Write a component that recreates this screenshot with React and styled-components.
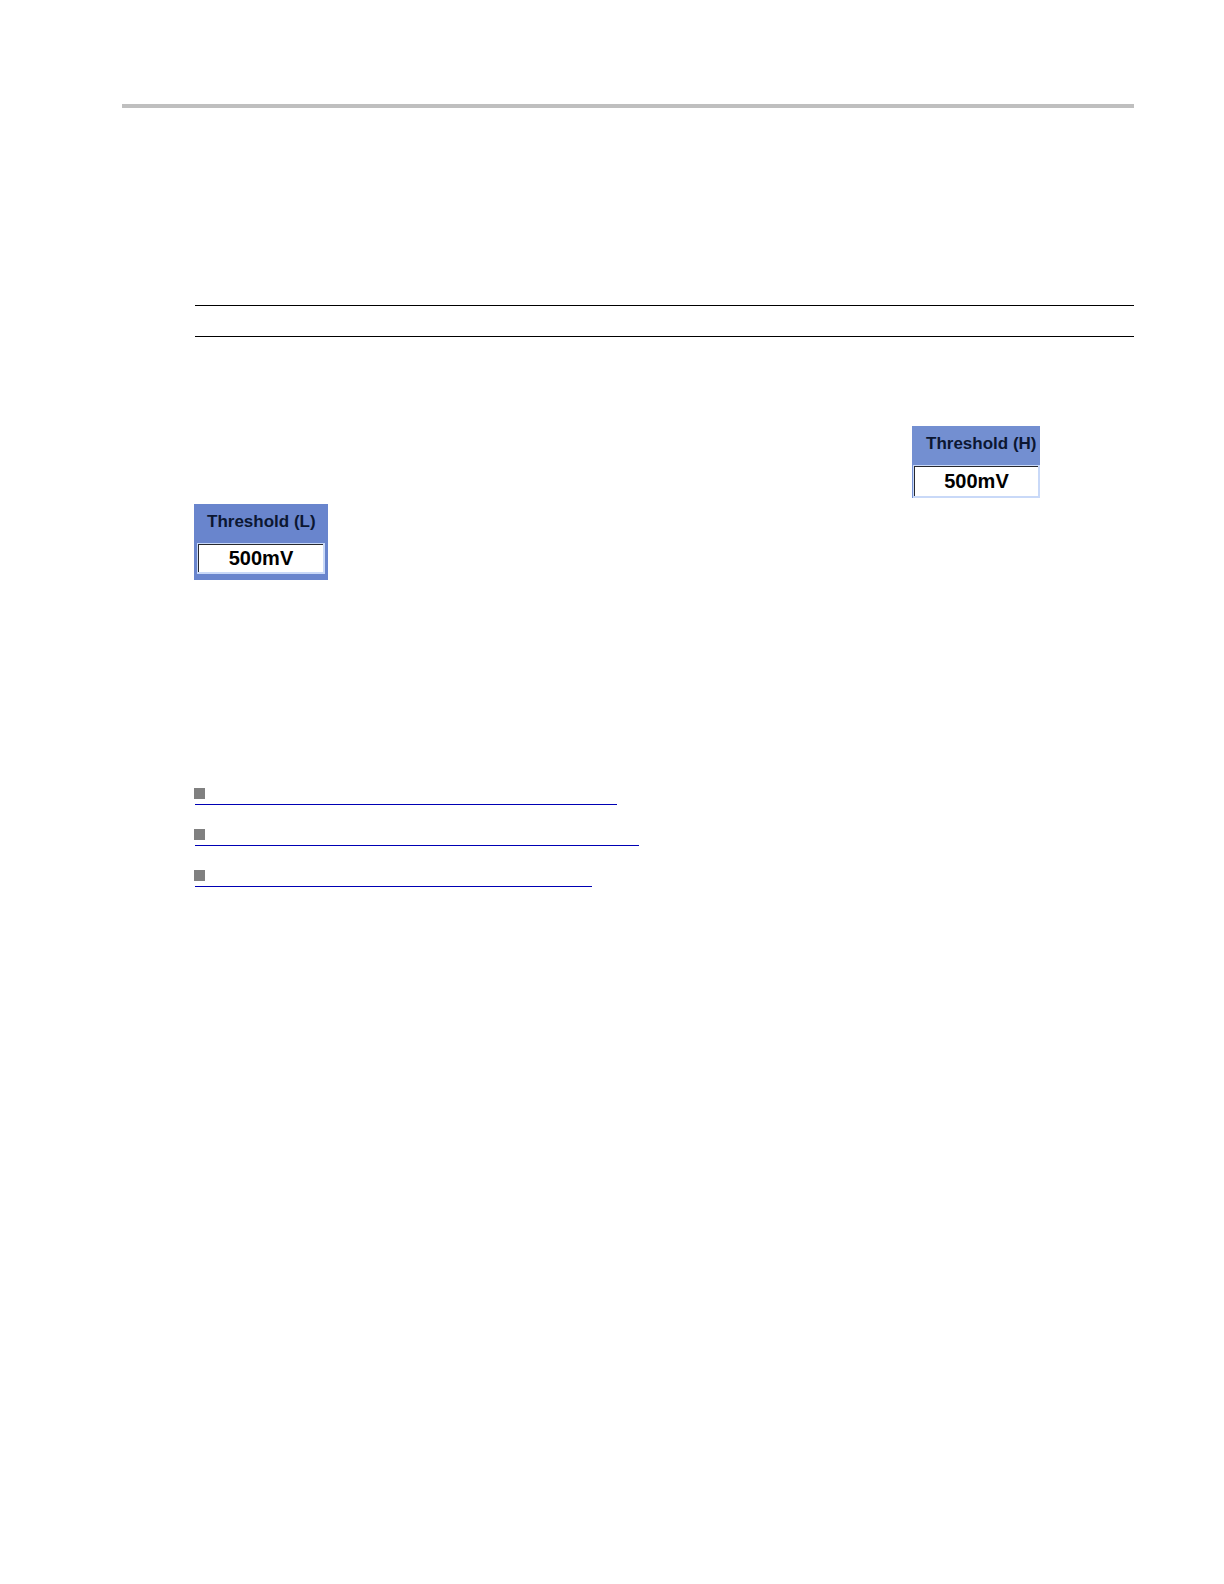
import React from "react";
import styled, { createGlobalStyle } from "styled-components";

const GlobalStyle = createGlobalStyle`
  *, *::before, *::after { box-sizing: border-box; }
  body {
    margin: 0;
    background: #ffffff;
    font-family: "Liberation Sans", Arial, sans-serif;
  }
`;

const Page = styled.div`
  padding: 104px 90px 0 122px;
`;

const HeaderBar = styled.header`
  height: 4px;
  background: #bfbfbf;
`;

const Content = styled.main`
  display: flex;
  flex-direction: column;
  padding: 197px 0 0 72px;
`;

const NoteBand = styled.div`
  height: 32px;
  margin-left: 1px;
  border: solid #000000;
  border-width: 1px 0;
`;

const Thresholds = styled.section`
  display: flex;
  flex-direction: column;
  gap: 6px;
  padding-top: 89px;
`;

const Panel = styled.div`
  display: flex;
  flex-direction: column;
  align-self: ${(p) => (p.$high ? "flex-end" : "flex-start")};
  width: ${(p) => (p.$high ? 128 : 134)}px;
  height: ${(p) => (p.$high ? 72 : 76)}px;
  margin-right: ${(p) => (p.$high ? 94 : 0)}px;
  padding: ${(p) => (p.$high ? "0 0 0 1px" : "0 3px 6px")};
  background: ${(p) => (p.$high ? "#738fd1" : "#6985cd")};
`;

const PanelLabel = styled.label`
  height: 39px;
  padding-left: ${(p) => (p.$high ? 13 : 10)}px;
  font-size: 17px;
  font-weight: bold;
  line-height: 36px;
  white-space: nowrap;
  color: #0c1732;
`;

const Field = styled.div`
  display: flex;
  flex: 1;
  border: solid #c9d9f8;
  border-width: 1px 2px 2px 1px;
`;

const ValueInput = styled.input`
  flex: 1;
  min-width: 0;
  margin: 0;
  padding: 0;
  border: solid #26282e;
  border-width: 1px 0 0 1px;
  border-radius: 0;
  background: #ffffff;
  color: #000000;
  font-family: inherit;
  font-size: 20px;
  font-weight: bold;
  text-align: center;
`;

const LinkList = styled.ul`
  display: flex;
  flex-direction: column;
  gap: 24px;
  margin: 0;
  padding: 208px 0 0;
  list-style: none;
`;

const LinkItem = styled.li`
  display: flex;
  flex-direction: column;
  gap: 5px;
`;

const Bullet = styled.span`
  width: 11px;
  height: 11px;
  background: #808080;
`;

const TopicLink = styled.a`
  width: ${(p) => p.$length}px;
  max-width: 100%;
  height: 1px;
  margin-left: 1px;
  background: #0000b4;
`;

const thresholds = [
  { id: "threshold-high", label: "Threshold (H)", value: "500mV", high: true },
  { id: "threshold-low", label: "Threshold (L)", value: "500mV", high: false },
];

const topics = [
  { id: "topic-1", length: 422 },
  { id: "topic-2", length: 444 },
  { id: "topic-3", length: 397 },
];

function ThresholdPanel({ id, label, value, high }) {
  return (
    <Panel $high={high}>
      <PanelLabel htmlFor={id} $high={high}>{label}</PanelLabel>
      <Field>
        <ValueInput id={id} type="text" defaultValue={value} />
      </Field>
    </Panel>
  );
}

export default function App() {
  return (
    <>
      <GlobalStyle />
      <Page>
        <HeaderBar />
        <Content>
          <NoteBand />
          <Thresholds>
            {thresholds.map((t) => (
              <ThresholdPanel key={t.id} {...t} />
            ))}
          </Thresholds>
          <LinkList>
            {topics.map((t) => (
              <LinkItem key={t.id}>
                <Bullet />
                <TopicLink href={`#${t.id}`} $length={t.length} />
              </LinkItem>
            ))}
          </LinkList>
        </Content>
      </Page>
    </>
  );
}
